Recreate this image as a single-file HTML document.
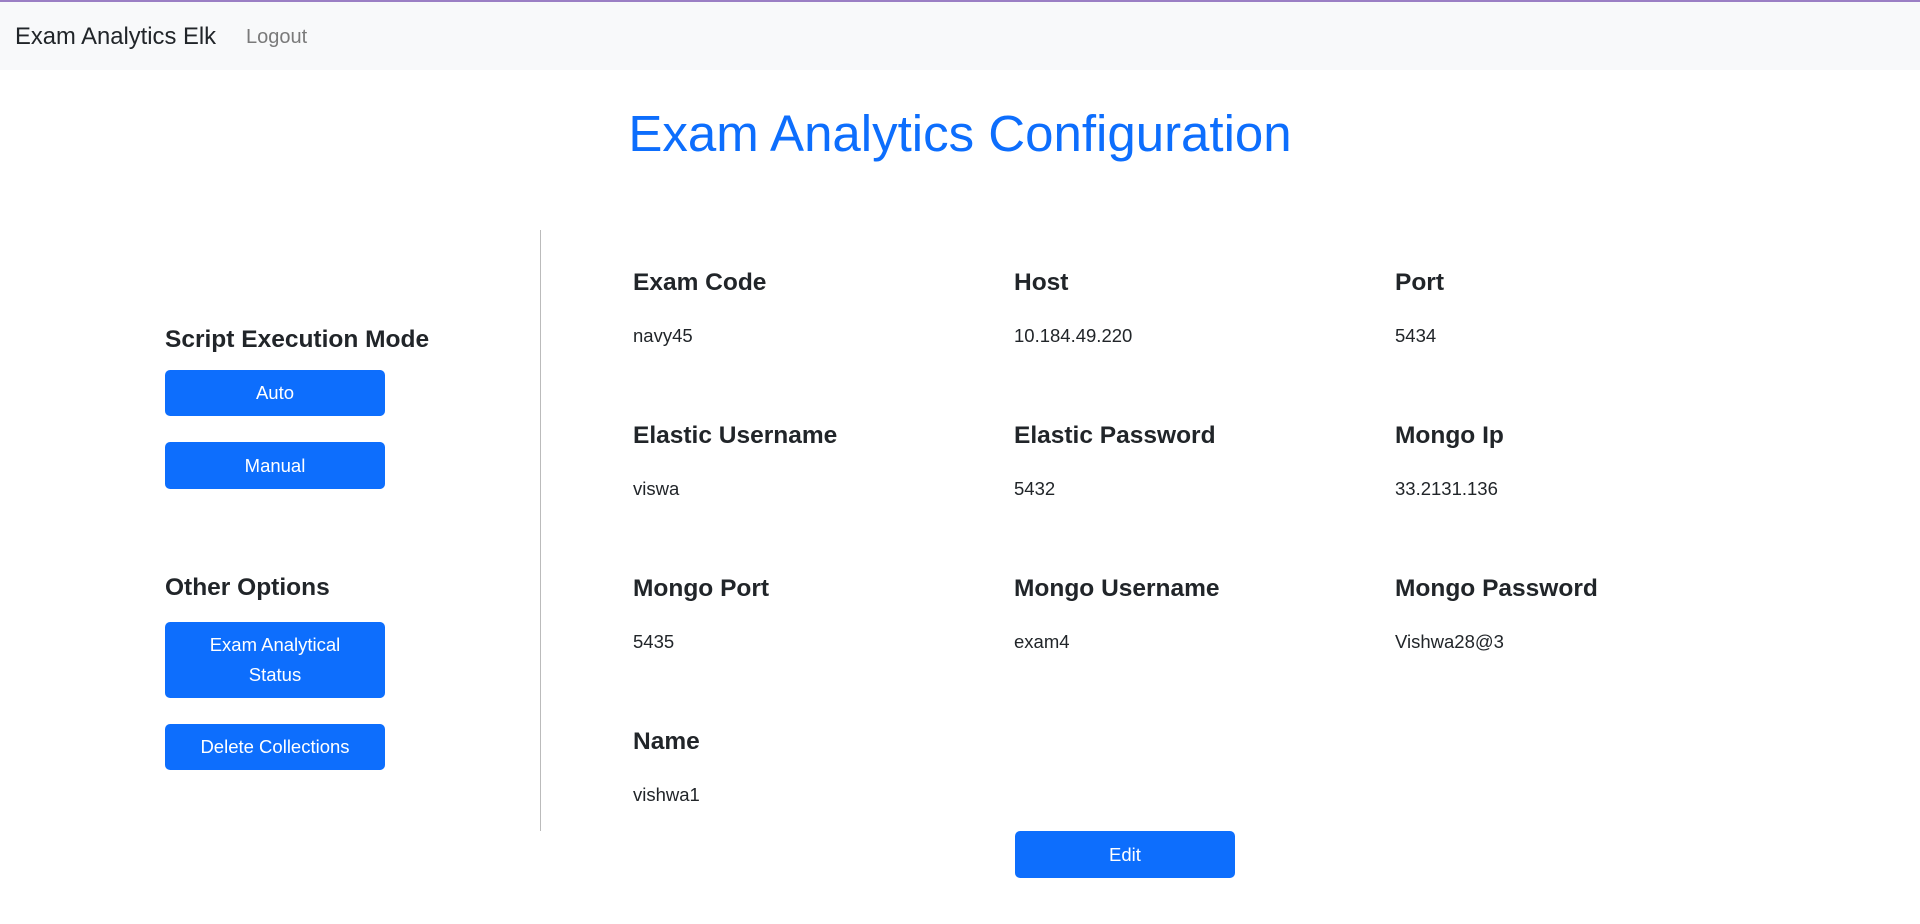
<!DOCTYPE html>
<html><head><meta charset="utf-8"><style>
*{margin:0;padding:0;box-sizing:border-box}
body{width:1920px;height:924px;overflow:hidden;background:#fff;font-family:"Liberation Sans",sans-serif;color:#212529;position:relative}
.nav{position:absolute;left:0;top:0;width:1920px;height:70px;background:#f8f9fa;border-top:2px solid #9b7fc4}
.brand{position:absolute;left:15px;top:21px;font-size:23.8px;color:#212529}
.logout{position:absolute;left:246px;top:24px;font-size:20px;color:#7a7a7a}
.title{position:absolute;left:0;width:1920px;top:104px;text-align:center;font-size:51px;color:#0d6efd}
.div{position:absolute;left:540px;top:230px;width:1px;height:601px;background:#bbb}
.h{position:absolute;font-size:24.5px;font-weight:bold;white-space:nowrap}
.v{position:absolute;font-size:18.5px;white-space:nowrap}
.btn{position:absolute;background:#0d6efd;color:#fff;border-radius:5px;font-size:18.5px;display:flex;align-items:center;justify-content:center;text-align:center;line-height:30px}
</style></head><body>
<div class="nav"><span class="brand">Exam Analytics Elk</span><span class="logout">Logout</span></div>
<div class="title">Exam Analytics Configuration</div>
<div class="div"></div>
<div class="h" style="left:165px;top:326px">Script Execution Mode</div>
<div class="btn" style="left:165px;top:370px;width:220px;height:46px">Auto</div>
<div class="btn" style="left:165px;top:442px;width:220px;height:47px">Manual</div>
<div class="h" style="left:165px;top:574px">Other Options</div>
<div class="btn" style="left:165px;top:622px;width:220px;height:76px">Exam Analytical<br>Status</div>
<div class="btn" style="left:165px;top:724px;width:220px;height:46px">Delete Collections</div>

<div class="h" style="left:633px;top:269px">Exam Code</div>
<div class="h" style="left:1014px;top:269px">Host</div>
<div class="h" style="left:1395px;top:269px">Port</div>
<div class="v" style="left:633px;top:325px">navy45</div>
<div class="v" style="left:1014px;top:325px">10.184.49.220</div>
<div class="v" style="left:1395px;top:325px">5434</div>

<div class="h" style="left:633px;top:422px">Elastic Username</div>
<div class="h" style="left:1014px;top:422px">Elastic Password</div>
<div class="h" style="left:1395px;top:422px">Mongo Ip</div>
<div class="v" style="left:633px;top:478px">viswa</div>
<div class="v" style="left:1014px;top:478px">5432</div>
<div class="v" style="left:1395px;top:478px">33.2131.136</div>

<div class="h" style="left:633px;top:575px">Mongo Port</div>
<div class="h" style="left:1014px;top:575px">Mongo Username</div>
<div class="h" style="left:1395px;top:575px">Mongo Password</div>
<div class="v" style="left:633px;top:631px">5435</div>
<div class="v" style="left:1014px;top:631px">exam4</div>
<div class="v" style="left:1395px;top:631px">Vishwa28@3</div>

<div class="h" style="left:633px;top:728px">Name</div>
<div class="v" style="left:633px;top:784px">vishwa1</div>

<div class="btn" style="left:1015px;top:831px;width:220px;height:47px">Edit</div>
</body></html>
